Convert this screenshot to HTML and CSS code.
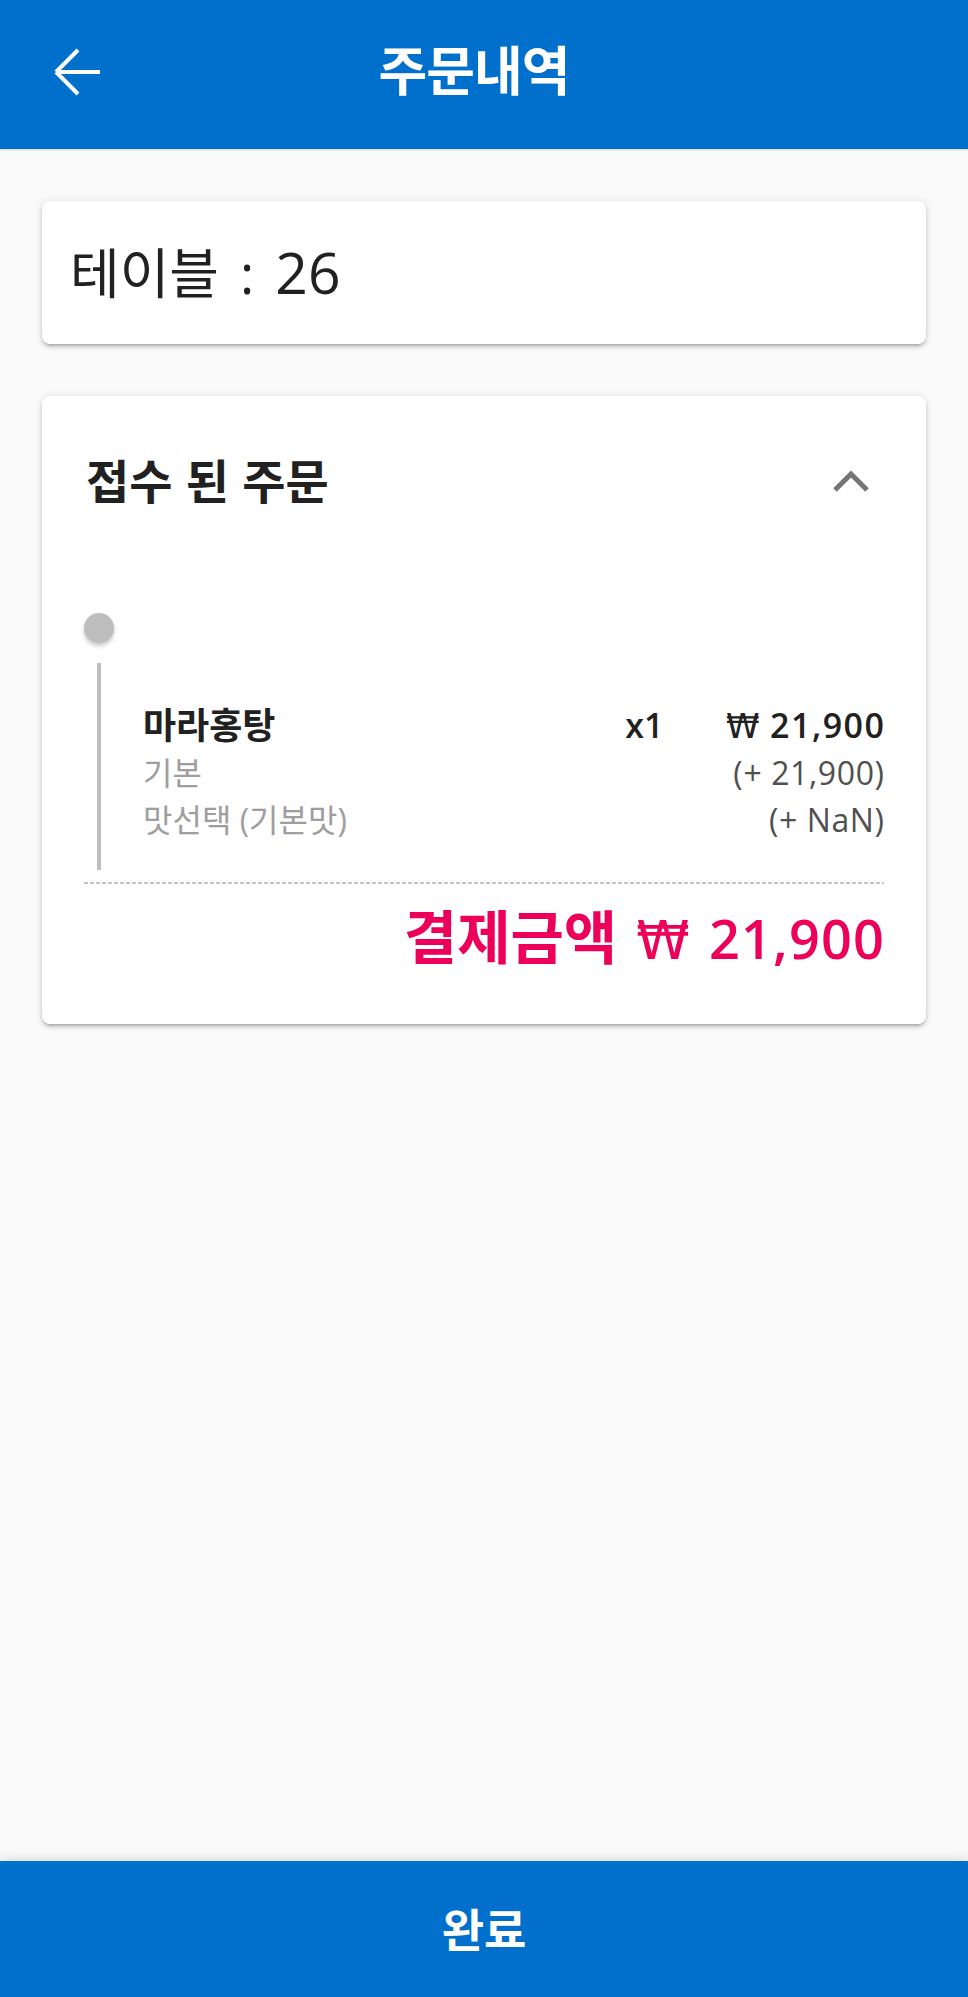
FILE: index.html
```html
<!DOCTYPE html>
<html lang="ko">
<head>
<meta charset="utf-8">
<title>주문내역</title>
<link rel="stylesheet" href="styles.css">
</head>
<body>
<header class="appbar">
  <div class="appbar-left">
    <svg class="back-icon" width="48" height="48" viewBox="0 0 48 48" aria-hidden="true">
      <path d="M3 24 L25 2 M3 24 L25 46 M3 24 H47" fill="none" stroke="#fff" stroke-width="4" stroke-linecap="butt"/>
    </svg>
  </div>
  <h1 class="appbar-title">주문내역</h1>
  <div class="appbar-right"></div>
</header>

<main class="content">
  <section class="card table-card">
    <p class="table-label">테이블 <span class="table-colon">:</span> <span class="table-no">26</span></p>
  </section>

  <section class="card order-card">
    <div class="order-head">
      <h2 class="order-title">접수 된 주문</h2>
      <svg class="chevron" width="36" height="24" viewBox="0 0 36 24" aria-hidden="true">
        <path d="M2 21 L18 5 L34 21" fill="none" stroke="#757575" stroke-width="5"/>
      </svg>
    </div>

    <div class="timeline">
      <div class="tl-dot"></div>
      <div class="tl-body">
        <div class="row main-row">
          <span class="item-name">마라홍탕</span>
          <span class="item-qty">x1</span>
          <span class="item-price"><span class="won">₩</span> 21,900</span>
        </div>
        <div class="row sub-row">
          <span class="opt-name">기본</span>
          <span class="opt-price">(+ 21,900)</span>
        </div>
        <div class="row sub-row">
          <span class="opt-name">맛선택 (기본맛)</span>
          <span class="opt-price">(+ NaN)</span>
        </div>
      </div>
    </div>

    <div class="divider"></div>

    <p class="total">결제금액 <span class="total-amount"><span class="won">₩</span> 21,900</span></p>
  </section>
</main>

<footer class="bottom-bar">
  <button class="done-btn" type="button">완료</button>
</footer>
</body>
</html>
```

FILE: styles.css
```css
* { box-sizing: border-box; }

html, body { height: 100%; }

body {
  margin: 0;
  min-height: 100vh;
  display: flex;
  flex-direction: column;
  background: #fafafa;
  font-family: "Open Sans", "Noto Sans CJK KR", sans-serif;
  color: #212121;
}

/* ---------- App bar ---------- */
.appbar {
  height: 149px;
  flex: 0 0 auto;
  background: #0070cc;
  display: grid;
  grid-template-columns: 150px 1fr 170px;
  align-items: center;
  box-shadow: 0 1px 2px rgba(0, 0, 0, 0.15);
}

.appbar-left {
  padding-left: 53px;
  display: flex;
  align-items: center;
  margin-top: -6px;
}

.back-icon { display: block; }

.appbar-title {
  margin: -8px 0 0;
  text-align: center;
  color: #fff;
  font-size: 53px;
  font-weight: 700;
  letter-spacing: -1px;
  line-height: 1;
}

/* ---------- Content ---------- */
.content {
  flex: 1 0 auto;
  padding: 0 42px;
}

.card {
  background: #fff;
  border-radius: 8px;
  box-shadow:
    0 3px 3px -2px rgba(0, 0, 0, 0.2),
    0 3px 4px 0 rgba(0, 0, 0, 0.14),
    0 1px 8px 0 rgba(0, 0, 0, 0.12);
}

.table-card {
  margin-top: 52px;
  height: 143px;
  padding: 0 28px;
  display: flex;
  align-items: center;
}

.table-label {
  margin: 0;
  font-size: 54px;
  font-weight: 400;
  line-height: 1;
  color: #212121;
  word-spacing: 7px;
}

.table-no { font-size: 57px; }

.order-card {
  margin-top: 52px;
  padding: 0 42px;
}

.order-head {
  height: 170px;
  display: flex;
  align-items: center;
  justify-content: space-between;
}

.order-title {
  margin: 0;
  padding-left: 2px;
  font-size: 47px;
  font-weight: 700;
  line-height: 1;
  color: #212121;
  word-spacing: 1px;
}

.chevron {
  display: block;
  margin-right: 15px;
}

/* ---------- Timeline ---------- */
.timeline {
  margin-top: 47px;
}

.tl-dot {
  width: 30px;
  height: 30px;
  border-radius: 50%;
  background: #bdbdbd;
  box-shadow: 0 3px 4px rgba(0, 0, 0, 0.22);
}

.tl-body {
  margin-top: 20px;
  margin-left: 13px;
  border-left: 4px solid #bdbdbd;
  padding: 39px 0 27px 42px;
}

.row {
  display: flex;
  align-items: center;
  line-height: 47px;
  height: 47px;
}

.main-row {
  font-size: 36px;
  font-weight: 700;
  color: #212121;
}

.item-name { flex: 1; }

.item-qty {
  font-size: 34px;
  font-weight: 600;
  margin-right: 40px;
}

.item-price {
  width: 182px;
  text-align: right;
  font-size: 34px;
  font-weight: 600;
  letter-spacing: 1.5px;
  margin-right: -1.5px;
}

.won {
  font-family: "DejaVu Sans", "Open Sans", sans-serif;
  font-weight: 400;
  letter-spacing: 0;
}

.sub-row {
  justify-content: space-between;
  font-size: 32px;
}

.opt-name { color: #9e9e9e; }

.opt-price {
  color: #505050;
  letter-spacing: 0.6px;
  margin-right: -0.6px;
}

/* ---------- Total ---------- */
.divider {
  margin-top: 12px;
  height: 2px;
  background-image: linear-gradient(to right, #c4c4c4 60%, transparent 60%);
  background-size: 6px 2px;
  background-repeat: repeat-x;
}

.total {
  margin: 18px 0 0;
  padding-bottom: 48px;
  text-align: right;
  font-size: 58px;
  font-weight: 700;
  line-height: 70px;
  color: #ec0059;
  word-spacing: 4px;
}

.total-amount {
  font-size: 54px;
  font-weight: 600;
  letter-spacing: 1.2px;
  margin-right: -1.2px;
}

/* ---------- Bottom bar ---------- */
.bottom-bar {
  flex: 0 0 auto;
  height: 136px;
  background: #0070cc;
  box-shadow: 0 -3px 10px rgba(0, 0, 0, 0.12);
}

.done-btn {
  width: 100%;
  height: 100%;
  border: 0;
  background: transparent;
  color: #fff;
  font-family: inherit;
  font-size: 46px;
  font-weight: 700;
  line-height: 1;
  padding: 0;
}
```
